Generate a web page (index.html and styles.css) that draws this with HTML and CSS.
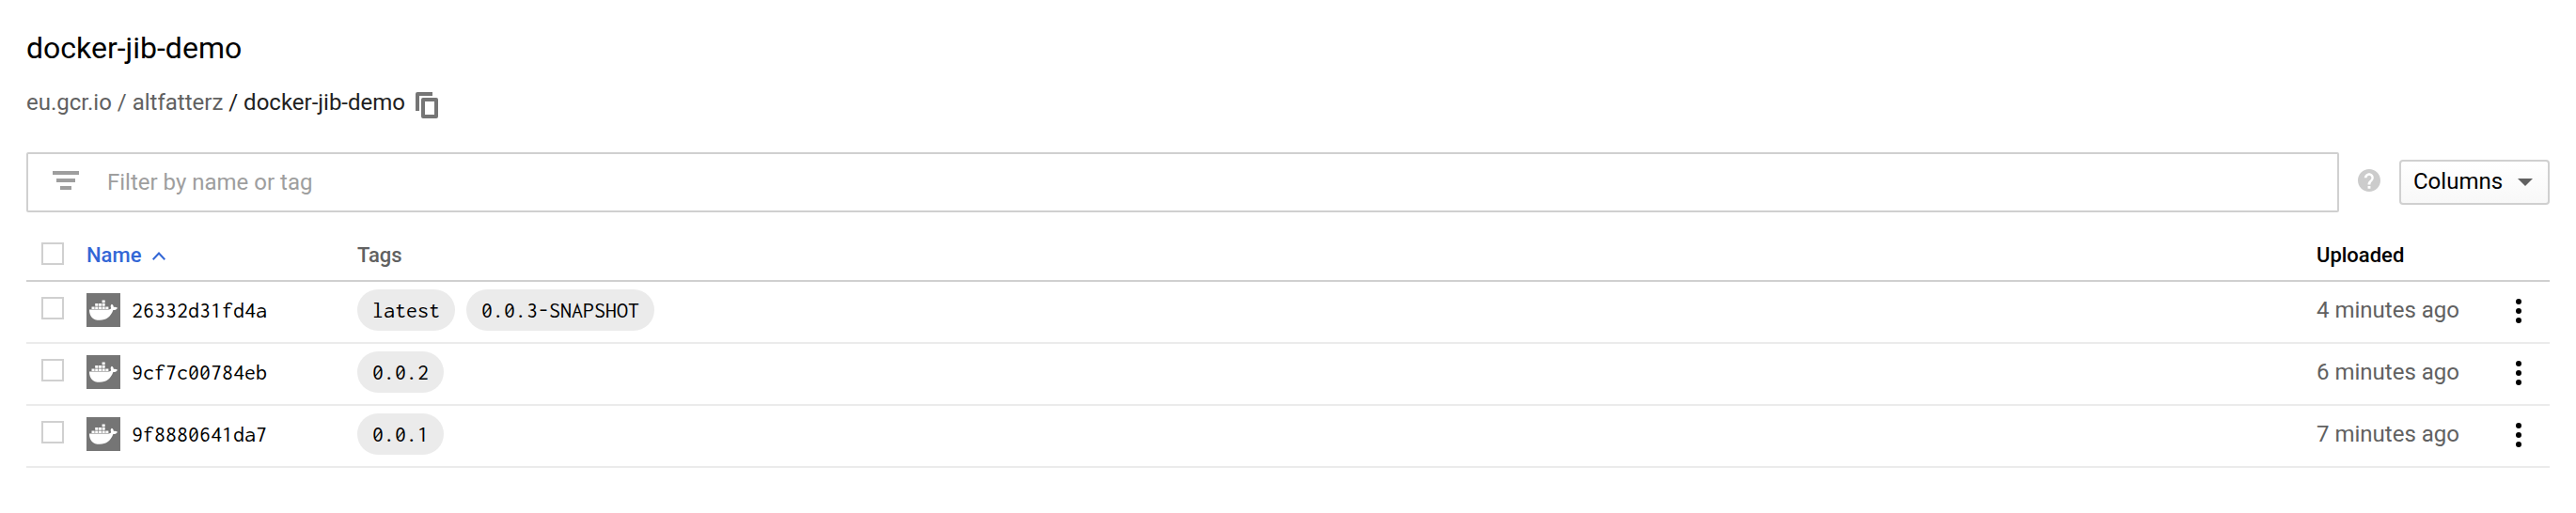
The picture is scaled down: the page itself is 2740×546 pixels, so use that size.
FILE: index.html
```html
<!DOCTYPE html>
<html lang="en">
<head>
<meta charset="utf-8">
<title>docker-jib-demo</title>
<link rel="stylesheet" href="styles.css">
</head>
<body>
<svg class="defs" width="0" height="0" aria-hidden="true">
  <symbol id="whale" viewBox="0 0 36 36">
    <path fill="#fff" d="M3 17.4H23.6C25 17.4 25.9 16.9 26.2 16C25.3 14.3 25.6 12.7 26.9 11.8C28.2 12.5 28.8 13.5 28.9 14.9C30.3 14.6 31.8 14.9 33 15.7C32.2 17.4 30.5 18.2 28.4 18.1C25.8 25 21.2 28.8 14 28.8C7 28.8 2.8 24.6 3 17.4Z"/>
    <path fill="#fff" d="M5.5 14.4h3.1v2.6H5.5zM9.2 14.4h3.1v2.6H9.2zM12.9 14.4h3.1v2.6h-3.1zM16.6 14.4h3.1v2.6h-3.1zM20.3 14.4h3.1v2.6h-3.1zM9.2 11h3.1v2.8H9.2zM12.9 11h3.1v2.8h-3.1zM16.6 11h3.1v2.8h-3.1zM16.6 7.4h3.1v2.9h-3.1z"/>
  </symbol>
  <symbol id="more" viewBox="0 0 6 26">
    <circle cx="3" cy="3" r="3"/><circle cx="3" cy="13" r="3"/><circle cx="3" cy="23" r="3"/>
  </symbol>
</svg>
<main class="page">
  <h1 class="title">docker-jib-demo</h1>
  <nav class="crumbs">
    <span class="path">eu.gcr.io / altfatterz <span class="current">/ docker-jib-demo</span></span>
    <svg class="copy" width="24" height="28" viewBox="0 0 24 28"><path fill="none" stroke="#757575" stroke-width="4" stroke-linejoin="round" d="M18 2H2V20M8 8H22V26H8Z"/></svg>
  </nav>
  <div class="toolbar">
    <div class="filter">
      <svg width="28" height="20" viewBox="0 0 28 20"><path fill="#9e9e9e" d="M0 0h28v4H0zM4 8h20v4H4zM8 16h12v4H8z"/></svg>
      <span>Filter by name or tag</span>
    </div>
    <svg class="help" width="24" height="24" viewBox="2 2 20 20"><path fill="#ccc" d="M12 2C6.48 2 2 6.48 2 12s4.48 10 10 10 10-4.48 10-10S17.52 2 12 2zm1.200 17.300h-2.400v-2.400h2.400zm1.870-7.050-.9.920C13.450 13.900 13.200 14.500 13.200 15.700h-2.400v-.5c0-1.100.65-2.100 1.370-2.830l1.240-1.260c.37-.36.59-.86.59-1.410 0-1.100-.9-2-2-2s-2 .9-2 2H7.700c0-2.210 2.090-4.200 4.300-4.200s4 1.790 4 4c0 .88-.36 2-.93 2.750z"/></svg>
    <div class="columns"><span>Columns</span><svg width="16" height="8" viewBox="0 0 16 8"><path fill="#616161" d="M0 0h16L8 8z"/></svg></div>
  </div>
  <section class="table">
    <div class="row head">
      <span class="check"></span>
      <span class="name sorted">Name<svg width="14" height="9" viewBox="0 0 14 9"><path fill="none" stroke="#3367d6" stroke-width="2" d="M.7 8.200 7 1.500l6.300 6.700"/></svg></span>
      <span class="tags">Tags</span>
      <span class="uploaded">Uploaded</span>
    </div>
    <div class="row">
      <span class="check"></span>
      <span class="name mono"><svg class="docker"><use href="#whale"/></svg>26332d31fd4a</span>
      <span class="tags mono"><span class="chip">latest</span><span class="chip">0.0.3-SNAPSHOT</span></span>
      <span class="uploaded">4 minutes ago</span>
      <svg class="more"><use href="#more"/></svg>
    </div>
    <div class="row">
      <span class="check"></span>
      <span class="name mono"><svg class="docker"><use href="#whale"/></svg>9cf7c00784eb</span>
      <span class="tags mono"><span class="chip">0.0.2</span></span>
      <span class="uploaded">6 minutes ago</span>
      <svg class="more"><use href="#more"/></svg>
    </div>
    <div class="row">
      <span class="check"></span>
      <span class="name mono"><svg class="docker"><use href="#whale"/></svg>9f8880641da7</span>
      <span class="tags mono"><span class="chip">0.0.1</span></span>
      <span class="uploaded">7 minutes ago</span>
      <svg class="more"><use href="#more"/></svg>
    </div>
  </section>
</main>
</body>
</html>
```
FILE: styles.css
```css
* { box-sizing: border-box; }
body { margin: 0; background: #fff; color: #000; font: 24px/32px Roboto, sans-serif; }
svg { display: block; flex: none; }
.defs { display: none; }
.page { padding: 30px 28px 0; }
.title { margin: 0; font-size: 32px; line-height: 42px; font-weight: 400; }
.crumbs { display: flex; align-items: center; gap: 11px; height: 32px; margin-top: 21px; color: #616161; white-space: pre; }
.copy { margin-top: 6px; }
.current { color: #212121; }
.toolbar { display: flex; align-items: center; margin-top: 37px; height: 64px; }
.filter { display: flex; align-items: center; gap: 30px; width: 2460px; height: 64px; padding-left: 26px; border: 2px solid #d0d0d0; border-radius: 2px; color: #9e9e9e; }
.filter svg { margin-top: -4px; }
.filter span { margin-top: -1px; }
.help { margin: -4px 20px 0; }
.columns { display: flex; align-items: center; justify-content: space-between; width: 160px; height: 48px; padding: 0 16px 0 13px; border: 2px solid #d0d0d0; border-radius: 4px; background: linear-gradient(#fff, #f8f8f8); }
.columns span { margin-top: -2px; }
.row { display: grid; grid-template-columns: 24px 288px 2108px 212px 6px; padding-left: 16px; height: 66px; align-items: center; border-bottom: 2px solid #ebebeb; }
.check { width: 24px; height: 24px; border: 2px solid #d0d0d0; margin-top: -8px; }
.name { display: flex; align-items: center; padding-left: 24px; margin-top: -4px; }
.tags { display: flex; gap: 12px; padding-left: 24px; margin-top: -4px; }
.uploaded { color: #616161; margin-top: -4px; }
.head { height: 74px; border-color: #d0d0d0; font-size: 22px; font-weight: 500; }
.head .check { margin-top: 16px; }
.head .name, .head .tags, .head .uploaded { margin-top: 20px; }
.head .tags { color: #616161; }
.head .uploaded { color: #000; }
.sorted { color: #3367d6; gap: 12px; }
.mono { font-family: Inconsolata, "Noto Sans Mono CJK JP", "Noto Sans Mono CJK SC", monospace; color: #000; }
.docker { width: 36px; height: 36px; background: #757575; margin-right: 12px; }
.chip { height: 44px; line-height: 44px; padding: 0 16px; border-radius: 22px; background: #ebebeb; }
.more { width: 6px; height: 26px; margin-top: -2px; }
```
